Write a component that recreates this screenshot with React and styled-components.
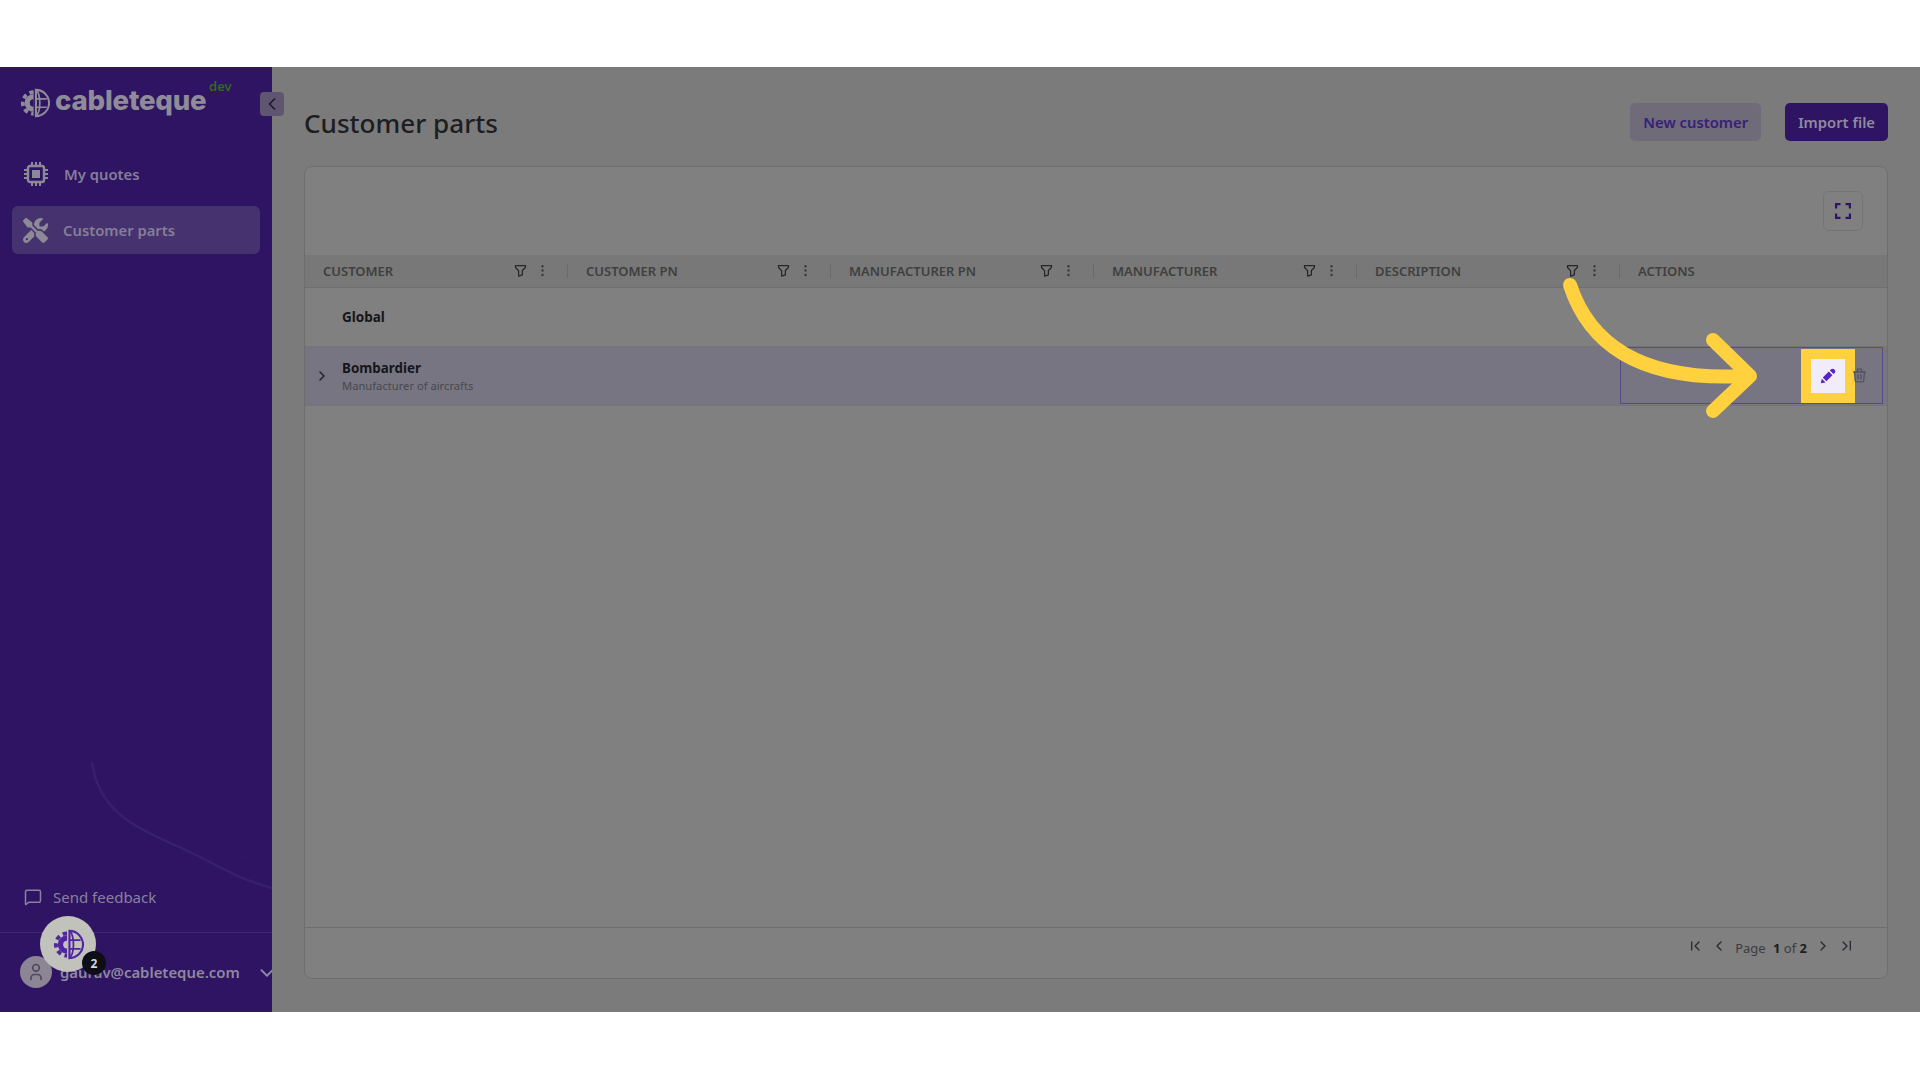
import React from "react";
import styled, { createGlobalStyle } from "styled-components";
import {
  TbFilter, TbDotsVertical, TbChevronRight, TbChevronLeft, TbChevronDown,
  TbChevronLeftPipe, TbChevronRightPipe, TbUser, TbTrash,
} from "react-icons/tb";
import { FaScrewdriverWrench } from "react-icons/fa6";
import { MessageSquare } from "lucide-react";

const Global = createGlobalStyle`
  html, body { margin: 0; padding: 0; background: #fff; }
  body { font-family: "Noto Sans", "Open Sans", sans-serif; }
  * { box-sizing: border-box; }
`;

const Page = styled.div`
  width: 1920px; height: 1080px; padding: 67px 0 68px; background: #fff; overflow: hidden; position: relative;
`;
const Shell = styled.div`
  display: flex; height: 945px; background: #7b7b7b; position: relative;
`;
const Sidebar = styled.aside`
  width: 272px; flex: none; background: #2e1463; display: flex; flex-direction: column; position: relative; overflow: hidden;
`;
const Swoosh = styled.svg`
  position: absolute; left: 0; bottom: 60px; width: 272px; height: 190px; pointer-events: none;
`;
const Brand = styled.div`
  display: flex; align-items: center; height: 62px; margin-top: 5px; padding: 0 0 0 20px; position: relative;
`;
const BrandName = styled.span`
  font-family: "Inter", sans-serif; font-weight: 800; font-size: 27.6px; letter-spacing: -0.2px; color: #8f8c98; margin-left: 5px; line-height: 1; position: relative; top: -2px;
`;
const DevTag = styled.span`
  font-family: "Noto Sans", sans-serif; font-weight: 600; font-size: 13px; color: #2f6a22; position: absolute; left: 209px; top: 5px;
`;
const Nav = styled.nav`
  display: flex; flex-direction: column; gap: 8px; padding: 16px 12px 0;
`;
const NavItem = styled.div`
  height: 48px; display: flex; align-items: center; gap: 15px; padding-left: 11px; border-radius: 6px;
  font-size: 14.8px; font-weight: 600; color: #857e97;
  background: ${p => (p.$active ? "#46326f" : "transparent")};
  svg { color: #8d8a98; flex: none; }
`;
const Spacer = styled.div` flex: 1; `;
const Feedback = styled.div`
  display: flex; align-items: center; gap: 11px; padding: 0 0 0 24px; height: 32px; margin-bottom: 19px;
  font-size: 15px; color: #8a8299; position: relative;
  svg { color: #8a8299; }
`;
const UserRow = styled.div`
  border-top: 1px solid #3f2873; height: 80px; display: flex; align-items: center; padding: 0 0 2px 20px; gap: 8px;
  font-size: 14.9px; font-weight: 600; color: #8f89a0; position: relative;
`;
const Avatar = styled.div`
  width: 32px; height: 32px; border-radius: 50%; background: #8b8594; display: flex; align-items: center; justify-content: center; color: #4e4860; flex: none;
`;
const UserChevron = styled.span`
  position: absolute; left: 256px; top: 29px; color: #8f89a0; display: flex;
`;
const Widget = styled.div`
  position: absolute; left: 40px; top: 849px; width: 56px; height: 56px; border-radius: 50%; background: #c2c2bd;
  display: flex; align-items: center; justify-content: center; z-index: 3;
`;
const Badge = styled.div`
  position: absolute; left: 42px; top: 35px; width: 24px; height: 24px; border-radius: 50%; background: #0d0e16; color: #d8d8d8;
  font-size: 12px; font-weight: 700; display: flex; align-items: center; justify-content: center;
`;
const Collapse = styled.button`
  position: absolute; left: 260px; top: 25px; width: 24px; height: 24px; padding: 0; border: 0; border-radius: 4px; background: #5f5570;
  display: flex; align-items: center; justify-content: center; color: #1d1d22; z-index: 2;
`;
const Main = styled.main`
  flex: 1; padding: 36px 32px 33px; display: flex; flex-direction: column; background: #7b7b7b; min-width: 0;
`;
const TopBar = styled.div`
  display: flex; align-items: center; height: 38px; gap: 24px; margin-bottom: 25px;
`;
const Title = styled.h1`
  margin: 2px auto 0 0; font-size: 26.1px; font-weight: 500; color: #1d1d22; line-height: 38px;
`;
const Btn = styled.button`
  height: 38px; border: 0; border-radius: 5px; font-family: inherit; font-size: 14.8px; font-weight: 600; padding: 0 13px;
  background: ${p => (p.$primary ? "#2e1463" : "#6f6b78")}; color: ${p => (p.$primary ? "#8f8a9e" : "#37207a")};
`;
const Card = styled.section`
  flex: 1; display: flex; flex-direction: column; background: #808080; border: 1px solid #6e6e6e; border-radius: 8px; overflow: hidden;
`;
const CardTools = styled.div`
  height: 88px; display: flex; justify-content: flex-end; align-items: flex-start; padding: 24px 24px 0 0; flex: none;
`;
const IconBtn = styled.button`
  width: 40px; height: 40px; background: transparent; border: 1px solid #747474; border-radius: 6px; padding: 0; display: flex; align-items: center; justify-content: center; color: #2e1466;
`;
const HeadRow = styled.div`
  display: grid; grid-template-columns: repeat(5, 263px) 1fr; height: 33px; background: #787878; border-bottom: 1px solid #6f6f6f; flex: none;
`;
const HeadCell = styled.div`
  display: flex; align-items: center; padding: 0 18px; position: relative; font-size: 13px; font-weight: 600; color: #3f3f3f; text-transform: uppercase;
`;
const HeadLabel = styled.span` flex: 1; `;
const HeadIcons = styled.span`
  display: flex; align-items: center; gap: 7px; color: #26262a; margin: -1px 0 0 0;
`;
const DotsIcon = styled(TbDotsVertical)` color: #3b3b3b; `;
const Separator = styled.span`
  position: absolute; right: 0; top: 9px; height: 14px; border-right: 1px solid #6b6b6b;
`;
const GlobalRow = styled.div`
  height: 59px; display: flex; align-items: center; padding: 0 0 0 37px; border-bottom: 1px solid #757575; font-size: 13.5px; font-weight: 700; color: #16161a; flex: none;
`;
const CustomerRow = styled.div`
  display: grid; grid-template-columns: 1315px 1fr; height: 59px; background: #777582; flex: none; border-bottom: 1px solid #757575;
`;
const CustomerCell = styled.div`
  display: flex; align-items: center; padding-left: 9px; gap: 12px;
  svg { color: #1d1d22; flex: none; }
`;
const CustomerText = styled.div` display: flex; flex-direction: column; `;
const CustomerName = styled.div` font-size: 13.4px; font-weight: 700; color: #16161a; line-height: 18px; `;
const CustomerNote = styled.div` font-size: 11.2px; color: #48484e; line-height: 17px; `;
const ActionsCell = styled.div`
  border: 1px solid #5a4a88; margin: 0 4px 1px 0; display: flex; align-items: center; justify-content: flex-end; padding-right: 14px;
`;
const EditBtn = styled.button`
  width: 54px; height: 54px; background: #f0ecfa; border: 10px solid #ffd13f; padding: 0; display: flex; align-items: center; justify-content: center;
`;
const Trash = styled(TbTrash)` color: #55535f; flex: none; margin-left: -4px; `;
const Body = styled.div` flex: 1; `;
const Footer = styled.div`
  height: 51px; flex: none; border-top: 1px solid #6e6e6e; display: flex; align-items: center; justify-content: flex-end; padding: 0 32px 14px 0; color: #25252b; gap: 8px;
  svg { flex: none; color: #2a2a30; }
`;
const PageInfo = styled.span`
  color: #3c3c44; font-size: 13px; padding-top: 3px; b { color: #1c1c22; font-weight: 700; }
`;
const PageLabel = styled.span` margin-right: 4px; `;
const ArrowLayer = styled.svg`
  position: absolute; left: 0; top: 0; width: 1920px; height: 1080px; pointer-events: none; z-index: 5;
`;

const Globe = ({ size, fg, bg }) => (
  <svg width={size} height={size} viewBox="0 0 32 32" fill="none">
    <path d="M14.500 6.500A9.500 9.500 0 0 0 14.500 25.500z" fill={fg} />
    <path d="M14.500 4.500A11.500 11.500 0 0 0 14.500 27.500" stroke={fg} strokeWidth="4" strokeDasharray="4.500 3.800" />
    <path d="M14.500 12a4 4 0 0 0 0 8z" fill={bg} />
    <path d="M17 2a14 14 0 0 1 0 28z" stroke={fg} strokeWidth="2.200" />
    <path d="M17 2c5.500 5 5.500 23 0 28M17 11.500h11.500M17 20.500h11.500" stroke={fg} strokeWidth="1.800" />
  </svg>
);

const ChipIcon = () => (
  <svg width="26" height="26" viewBox="0 0 26 26" fill="none" stroke="currentColor">
    <rect x="5" y="5" width="16" height="16" rx="2" strokeWidth="2.400" />
    <rect x="9" y="9" width="8" height="8" fill="currentColor" stroke="none" />
    <path d="M9 1v4M13 1v4M17 1v4M9 21v4M13 21v4M17 21v4M1 9h4M1 13h4M1 17h4M21 9h4M21 13h4M21 17h4" strokeWidth="2" />
  </svg>
);

const FullscreenIcon = () => (
  <svg width="16" height="16" viewBox="0 0 16 16" fill="none" stroke="currentColor" strokeWidth="2.200">
    <path d="M1.100 5.500V1.100H5.500M10.500 1.100H14.900V5.500M14.900 10.500V14.900H10.500M5.500 14.900H1.100V10.500" />
  </svg>
);

const columns = ["Customer", "Customer PN", "Manufacturer PN", "Manufacturer", "Description"];

export default function App() {
  return (
    <Page>
      <Global />
      <Shell>
        <Sidebar>
          <Swoosh viewBox="0 0 272 190" fill="none">
            <path d="M92 0c8 60 60 70 110 96 20 10 40 22 70 30" stroke="#37206c" strokeWidth="2.500" />
            <path d="M60 40c20 70 90 90 130 150M20 60c30 60 60 90 90 130M130 30c30 50 80 60 142 70" stroke="#311768" strokeWidth="1" />
          </Swoosh>
          <Brand>
            <Globe size={30} fg="#8f8c98" bg="#2e1463" />
            <BrandName>cableteque</BrandName>
            <DevTag>dev</DevTag>
          </Brand>
          <Nav>
            <NavItem><ChipIcon /><span>My quotes</span></NavItem>
            <NavItem $active><FaScrewdriverWrench size={25} /><span>Customer parts</span></NavItem>
          </Nav>
          <Spacer />
          <Feedback><MessageSquare size={18} /><span>Send feedback</span></Feedback>
          <UserRow>
            <Avatar><TbUser size={20} /></Avatar>
            <span>gaurav@cableteque.com</span>
            <UserChevron><TbChevronDown size={22} /></UserChevron>
          </UserRow>
        </Sidebar>
        <Collapse><TbChevronLeft size={20} /></Collapse>
        <Widget>
          <Globe size={31} fg="#4f25a0" bg="#c2c2bd" />
          <Badge>2</Badge>
        </Widget>
        <Main>
          <TopBar>
            <Title>Customer parts</Title>
            <Btn>New customer</Btn>
            <Btn $primary>Import file</Btn>
          </TopBar>
          <Card>
            <CardTools>
              <IconBtn><FullscreenIcon /></IconBtn>
            </CardTools>
            <HeadRow>
              {columns.map(c => (
                <HeadCell key={c}>
                  <HeadLabel>{c}</HeadLabel>
                  <HeadIcons><TbFilter size={15} /><DotsIcon size={15} /></HeadIcons>
                  <Separator />
                </HeadCell>
              ))}
              <HeadCell><HeadLabel>Actions</HeadLabel></HeadCell>
            </HeadRow>
            <GlobalRow>Global</GlobalRow>
            <CustomerRow>
              <CustomerCell>
                <TbChevronRight size={16} />
                <CustomerText>
                  <CustomerName>Bombardier</CustomerName>
                  <CustomerNote>Manufacturer of aircrafts</CustomerNote>
                </CustomerText>
              </CustomerCell>
              <ActionsCell>
                <EditBtn>
                  <svg width="16" height="16" viewBox="0 0 16 16"><path d="M.8 15.200l1-4.500 3.700 3.700zM2.800 9.600l6-6 3.600 3.600-6 6zM9.900 2.500l.9-.9a2.500 2.500 0 0 1 3.600 3.600l-.9.9z" fill="#5b21c4" /></svg>
                </EditBtn>
                <Trash size={17} />
              </ActionsCell>
            </CustomerRow>
            <Body />
            <Footer>
              <TbChevronLeftPipe size={16} />
              <TbChevronLeft size={16} />
              <PageInfo><PageLabel>Page</PageLabel> <b>1</b> of <b>2</b></PageInfo>
              <TbChevronRight size={16} />
              <TbChevronRightPipe size={16} />
            </Footer>
          </Card>
        </Main>
      </Shell>
      <ArrowLayer viewBox="0 0 1920 1080" fill="none">
        <path d="M1570 285C1588 340 1635 382 1745 376" stroke="#ffd13f" strokeWidth="14" strokeLinecap="round" />
        <path d="M1713 340L1750 376L1713 411" stroke="#ffd13f" strokeWidth="14" strokeLinecap="round" strokeLinejoin="round" />
      </ArrowLayer>
    </Page>
  );
}
